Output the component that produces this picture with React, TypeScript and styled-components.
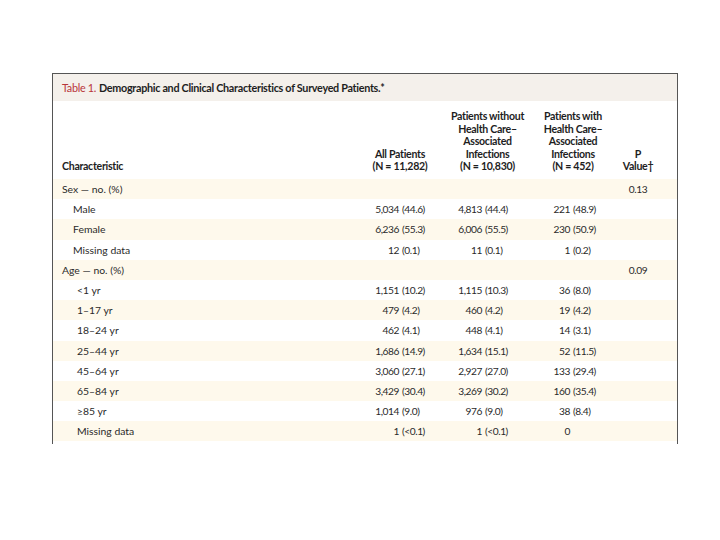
import React from "react";
import styled, { createGlobalStyle } from "styled-components";

const Global = createGlobalStyle`
  html, body { margin: 0; padding: 0; background: #ffffff; }
  body { font-family: Lato, "Liberation Sans", sans-serif; color: #262626; }
`;

const Page = styled.div`
  width: 720px;
  height: 540px;
  padding: 73px 0 0 52px;
  box-sizing: border-box;
`;

const Box = styled.div`
  width: 626px;
  border: 1px solid #555;
  border-bottom: none;
  box-sizing: border-box;
  padding-bottom: 3px;
`;

const TitleBar = styled.div`
  height: 27px;
  background: #f4f0eb;
  display: flex;
  align-items: center;
  padding-left: 9px;
  font-size: 10.8px;
  font-weight: 700;
  letter-spacing: -0.3px;
  color: #1e1e1e;
  white-space: nowrap;
`;

const TitleLabel = styled.span`
  color: #b8353a;
  font-weight: 400;
  margin-right: 3px;
`;

const cols = "302px 90px 85px 86px 44px 1fr";

const HeaderRow = styled.div`
  display: grid;
  grid-template-columns: ${cols};
  align-items: end;
  height: 78px;
  padding-bottom: 6px;
  box-sizing: border-box;
  font-size: 10.6px;
  font-weight: 700;
  letter-spacing: -0.3px;
  line-height: 12.6px;
  color: #1e1e1e;
`;

const HeadCell = styled.div<{ $left?: boolean }>`
  text-align: ${(p) => (p.$left ? "left" : "center")};
  padding-left: ${(p) => (p.$left ? "9px" : "0")};
`;

const Row = styled.div<{ $shade: boolean }>`
  display: grid;
  grid-template-columns: ${cols};
  align-items: center;
  height: 20.2px;
  background: ${(p) => (p.$shade ? "#fef9ec" : "#ffffff")};
  font-size: 10.4px;
  color: #2a2a2a;
  white-space: nowrap;
`;

const Label = styled.div<{ $indent: number }>`
  padding-left: ${(p) => p.$indent}px;
`;

const NumCell = styled.div<{ $split: number }>`
  display: grid;
  grid-template-columns: ${(p) => p.$split}px auto;
  font-size: 10.2px;
  letter-spacing: -0.45px;
`;

const NumPart = styled.span`
  text-align: right;
  padding-right: 3px;
`;

const PctPart = styled.span`
  text-align: left;
`;

const PCell = styled.div`
  text-align: center;
  font-size: 10.2px;
  letter-spacing: -0.45px;
`;

type RowData = {
  label: string;
  indent: number;
  v: [string, string][] | null;
  p?: string;
};

const rows: RowData[] = [
  { label: "Sex — no. (%)", indent: 9, v: null, p: "0.13" },
  { label: "Male", indent: 20, v: [["5,034", "(44.6)"], ["4,813", "(44.4)"], ["221", "(48.9)"]] },
  { label: "Female", indent: 20, v: [["6,236", "(55.3)"], ["6,006", "(55.5)"], ["230", "(50.9)"]] },
  { label: "Missing data", indent: 20, v: [["12", "(0.1)"], ["11", "(0.1)"], ["1", "(0.2)"]] },
  { label: "Age — no. (%)", indent: 9, v: null, p: "0.09" },
  { label: "<1 yr", indent: 24, v: [["1,151", "(10.2)"], ["1,115", "(10.3)"], ["36", "(8.0)"]] },
  { label: "1–17 yr", indent: 24, v: [["479", "(4.2)"], ["460", "(4.2)"], ["19", "(4.2)"]] },
  { label: "18–24 yr", indent: 24, v: [["462", "(4.1)"], ["448", "(4.1)"], ["14", "(3.1)"]] },
  { label: "25–44 yr", indent: 24, v: [["1,686", "(14.9)"], ["1,634", "(15.1)"], ["52", "(11.5)"]] },
  { label: "45–64 yr", indent: 24, v: [["3,060", "(27.1)"], ["2,927", "(27.0)"], ["133", "(29.4)"]] },
  { label: "65–84 yr", indent: 24, v: [["3,429", "(30.4)"], ["3,269", "(30.2)"], ["160", "(35.4)"]] },
  { label: "≥85 yr", indent: 24, v: [["1,014", "(9.0)"], ["976", "(9.0)"], ["38", "(8.4)"]] },
  { label: "Missing data", indent: 24, v: [["1", "(<0.1)"], ["1", "(<0.1)"], ["0", ""]] },
];

const splits = [47, 40, 43];

export default function App() {
  return (
    <Page>
      <Global />
      <Box>
        <TitleBar>
          <TitleLabel>Table 1.</TitleLabel>
          Demographic and Clinical Characteristics of Surveyed Patients.*
        </TitleBar>
        <HeaderRow>
          <HeadCell $left>Characteristic</HeadCell>
          <HeadCell>
            All Patients
            <br />
            (N = 11,282)
          </HeadCell>
          <HeadCell>
            Patients without
            <br />
            Health Care–
            <br />
            Associated
            <br />
            Infections
            <br />
            (N = 10,830)
          </HeadCell>
          <HeadCell>
            Patients with
            <br />
            Health Care–
            <br />
            Associated
            <br />
            Infections
            <br />
            (N = 452)
          </HeadCell>
          <HeadCell>
            P
            <br />
            Value†
          </HeadCell>
          <div />
        </HeaderRow>
        {rows.map((r, i) => (
          <Row key={i} $shade={i % 2 === 0}>
            <Label $indent={r.indent}>{r.label}</Label>
            {r.v
              ? r.v.map(([n, pct], j) => (
                  <NumCell key={j} $split={splits[j]}>
                    <NumPart>{n}</NumPart>
                    <PctPart>{pct}</PctPart>
                  </NumCell>
                ))
              : [0, 1, 2].map((j) => <div key={j} />)}
            <PCell>{r.p ?? ""}</PCell>
            <div />
          </Row>
        ))}
      </Box>
    </Page>
  );
}
